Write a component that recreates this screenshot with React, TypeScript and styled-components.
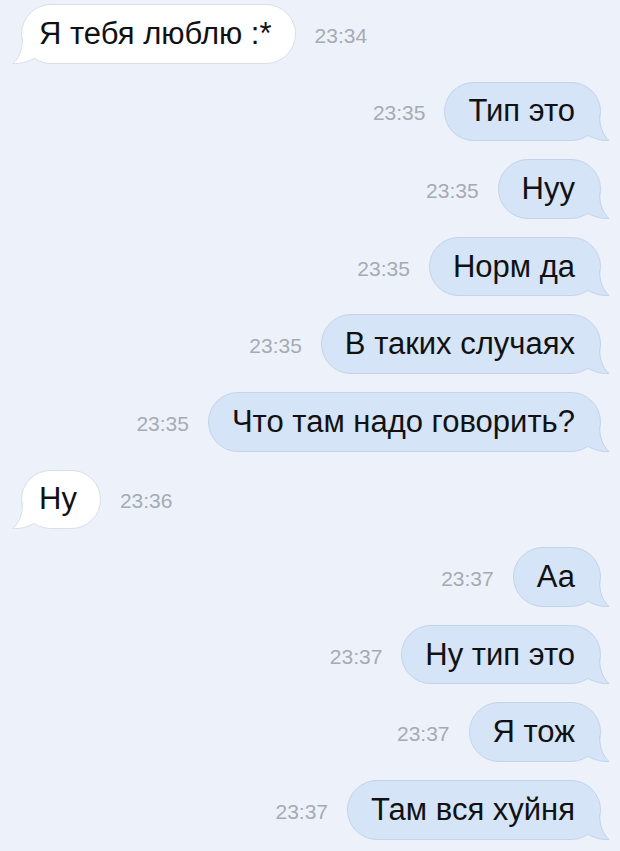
import styled, { createGlobalStyle } from 'styled-components';

interface Message {
  text: string;
  time: string;
  mine: boolean;
}

const messages: Message[] = [
  { text: 'Я тебя люблю :*', time: '23:34', mine: false },
  { text: 'Тип это', time: '23:35', mine: true },
  { text: 'Нуу', time: '23:35', mine: true },
  { text: 'Норм да', time: '23:35', mine: true },
  { text: 'В таких случаях', time: '23:35', mine: true },
  { text: 'Что там надо говорить?', time: '23:35', mine: true },
  { text: 'Ну', time: '23:36', mine: false },
  { text: 'Аа', time: '23:37', mine: true },
  { text: 'Ну тип это', time: '23:37', mine: true },
  { text: 'Я тож', time: '23:37', mine: true },
  { text: 'Там вся хуйня', time: '23:37', mine: true },
];

const GlobalStyle = createGlobalStyle`
  html, body {
    margin: 0;
    padding: 0;
    background: #edf2fa;
  }
  body {
    font-family: "Liberation Sans", Arial, sans-serif;
  }
`;

function Tail({ mine }: { mine: boolean }) {
  const fill = mine ? '#d5e4f7' : '#ffffff';
  const stroke = mine ? '#c3d3e8' : '#d9dfe7';
  return (
    <TailSvg mine={mine} width="22" height="26" viewBox="0 0 22 26">
      <path d="M0,0 L12,0 C12,12 15,20 21,25.5 C14,26 7,24 0,20.5 Z" fill={fill} />
      <path
        d="M11.5,0 C11.5,12 15,20 21,25.5 C14,26 7,24 0,20.5"
        fill="none"
        stroke={stroke}
        strokeWidth="1"
      />
    </TailSvg>
  );
}

function App() {
  return (
    <>
      <GlobalStyle />
      <Chat>
        {messages.map((m, i) => (
          <Row key={i} mine={m.mine}>
            <Bubble mine={m.mine}>
              {m.text}
              <Tail mine={m.mine} />
            </Bubble>
            <Time>{m.time}</Time>
          </Row>
        ))}
      </Chat>
    </>
  );
}

const Chat = styled.div`
  width: 620px;
  height: 851px;
  box-sizing: border-box;
  padding: 4px 19px 0 21px;
  display: flex;
  flex-direction: column;
  gap: 18px;
  overflow: hidden;
`;

const Row = styled.div<{ mine: boolean }>`
  display: flex;
  flex-direction: ${(p) => (p.mine ? 'row-reverse' : 'row')};
  align-items: center;
  gap: 19px;
  height: 59.6px;
`;

const Bubble = styled.div<{ mine: boolean }>`
  position: relative;
  height: 100%;
  box-sizing: border-box;
  display: flex;
  align-items: center;
  padding: ${(p) => (p.mine ? '0 25px 0 23px' : '0 23px 0 17px')};
  border-radius: 30px;
  background: ${(p) => (p.mine ? '#d5e4f7' : '#ffffff')};
  border: 1px solid ${(p) => (p.mine ? '#c3d3e8' : '#d9dfe7')};
  color: #111;
  font-size: 31px;
  white-space: nowrap;
`;

const TailSvg = styled.svg<{ mine: boolean }>`
  position: absolute;
  bottom: -1px;
  ${(p) => (p.mine ? 'right: -10px;' : 'left: -10px; transform: scaleX(-1);')}
`;

const Time = styled.div`
  color: #a5abb3;
  font-size: 21px;
  margin-top: 4px;
`;

export default App;
